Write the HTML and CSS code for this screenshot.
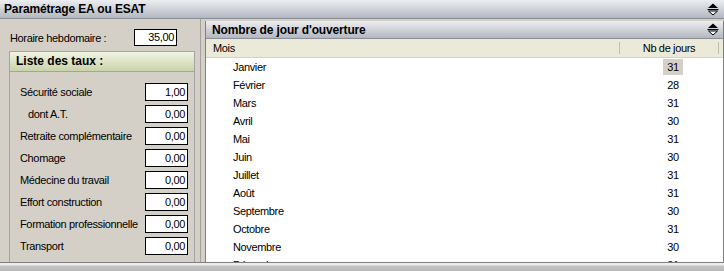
FILE: index.html
```html
<!DOCTYPE html>
<html>
<head>
<meta charset="utf-8">
<link rel="stylesheet" href="styles.css">
</head>
<body>
<div class="titlebar">
  <span class="title">Paramétrage EA ou ESAT</span>
  <svg class="toggle" width="12" height="13" viewBox="0 0 12 13"><path d="M6 0.5 L11 5 L1 5 Z" fill="#000"/><path d="M0.5 6.5 H11.5" stroke="#000" stroke-width="1"/><path d="M1.5 8 L10.5 8 L6 12 Z" fill="#fff" stroke="#000" stroke-width="1"/></svg>
</div>
<div class="main">
  <div class="left">
    <div class="horaire">
      <span>Horaire hebdomaire :</span>
      <div class="field">35,00</div>
    </div>
    <div class="group">
      <div class="group-head">Liste des taux :</div>
      <div class="rates">
        <div class="rate"><span>Sécurité sociale</span><div class="field">1,00</div></div>
        <div class="rate sub"><span>dont A.T.</span><div class="field">0,00</div></div>
        <div class="rate"><span>Retraite complémentaire</span><div class="field">0,00</div></div>
        <div class="rate"><span>Chomage</span><div class="field">0,00</div></div>
        <div class="rate"><span>Médecine du travail</span><div class="field">0,00</div></div>
        <div class="rate"><span>Effort construction</span><div class="field">0,00</div></div>
        <div class="rate"><span>Formation professionnelle</span><div class="field">0,00</div></div>
        <div class="rate"><span>Transport</span><div class="field">0,00</div></div>
      </div>
    </div>
  </div>
  <div class="right">
    <div class="panel-head">
      <span class="title">Nombre de jour d'ouverture</span>
      <svg class="toggle" width="12" height="13" viewBox="0 0 12 13"><path d="M6 0.5 L11 5 L1 5 Z" fill="#000"/><path d="M0.5 6.5 H11.5" stroke="#000" stroke-width="1"/><path d="M1.5 8 L10.5 8 L6 12 Z" fill="#fff" stroke="#000" stroke-width="1"/></svg>
    </div>
    <div class="cols">
      <div class="col-mois">Mois</div>
      <div class="col-nb">Nb de jours</div>
    </div>
    <div class="list">
      <div class="row"><span class="mois">Janvier</span><span class="nb current">31</span></div>
      <div class="row"><span class="mois">Février</span><span class="nb">28</span></div>
      <div class="row"><span class="mois">Mars</span><span class="nb">31</span></div>
      <div class="row"><span class="mois">Avril</span><span class="nb">30</span></div>
      <div class="row"><span class="mois">Mai</span><span class="nb">31</span></div>
      <div class="row"><span class="mois">Juin</span><span class="nb">30</span></div>
      <div class="row"><span class="mois">Juillet</span><span class="nb">31</span></div>
      <div class="row"><span class="mois">Août</span><span class="nb">31</span></div>
      <div class="row"><span class="mois">Septembre</span><span class="nb">30</span></div>
      <div class="row"><span class="mois">Octobre</span><span class="nb">31</span></div>
      <div class="row"><span class="mois">Novembre</span><span class="nb">30</span></div>
      <div class="row"><span class="mois">Décembre</span><span class="nb">31</span></div>
    </div>
  </div>
</div>
<div class="statusbar"></div>
</body>
</html>
```
FILE: styles.css
```css
html, body {
    margin: 0;
    padding: 0;
}
body {
    width: 724px;
    height: 271px;
    overflow: hidden;
    background: #d4d0c8;
    font-family: "Liberation Sans", Arial, sans-serif;
    font-size: 11px;
    letter-spacing: -0.35px;
    color: #000;
    white-space: nowrap;
}
.titlebar {
    height: 18px;
    border-bottom: 1px solid #8a8e96;
    background: linear-gradient(#eceef1, #b3b7bf);
    display: flex;
    align-items: center;
    justify-content: space-between;
    padding: 0 5px 0 4px;
}
.title {
    font-weight: bold;
    font-size: 12px;
    letter-spacing: -0.15px;
}
.toggle {
    display: block;
}
.main {
    height: 243px;
    display: flex;
}
.left {
    width: 201px;
    border-right: 1px solid #a4a09a;
    padding-top: 10px;
    box-sizing: border-box;
    overflow: hidden;
}
.horaire {
    display: flex;
    align-items: center;
    justify-content: space-between;
    padding: 0 23px 0 10px;
}
.field {
    width: 39px;
    height: 16px;
    border: 1px solid #000;
    background: #fff;
    text-align: right;
    padding-right: 2px;
    line-height: 16px;
    box-sizing: content-box;
}
.horaire .field {
    height: 15px;
    line-height: 15px;
}
.group {
    margin: 5px 0 0 9px;
    width: 186px;
    height: 400px;
    border: 1px solid #a4a4a4;
    box-sizing: border-box;
}
.group-head {
    height: 19px;
    line-height: 18px;
    padding-left: 6px;
    font-weight: bold;
    font-size: 12px;
    letter-spacing: 0;
    border-bottom: 1px solid #a4a4a4;
    background: linear-gradient(#f1f4e2, #c9d3ab);
}
.rates {
    padding: 11px 6px 0 10px;
    display: flex;
    flex-direction: column;
    gap: 4px;
}
.rate {
    display: flex;
    align-items: center;
    justify-content: space-between;
}
.rate.sub span {
    padding-left: 8px;
}
.right {
    flex: 1;
    margin: 2px 0 0 4px;
    border-left: 1px solid #808080;
    border-right: 1px solid #808080;
    background: #fff;
    overflow: hidden;
}
.panel-head {
    height: 17px;
    background: linear-gradient(#eceef1, #b3b7bf);
    border-bottom: 1px solid #8a8e96;
    display: flex;
    align-items: center;
    justify-content: space-between;
    padding: 0 4px 0 6px;
}
.cols {
    height: 18px;
    background: #ebe9d8;
    border-bottom: 1px solid #d6d2c2;
    display: flex;
    align-items: center;
}
.col-mois {
    width: 414px;
    padding-left: 7px;
    box-sizing: border-box;
    border-right: 1px solid #c4c0b0;
    height: 12px;
    line-height: 12px;
}
.col-nb {
    width: 98px;
    text-align: center;
    border-right: 1px solid #c4c0b0;
    height: 12px;
    line-height: 12px;
}
.row {
    height: 18px;
    display: flex;
    align-items: center;
}
.mois {
    width: 457px;
    padding-left: 27px;
    box-sizing: border-box;
}
.nb {
    width: 20px;
    height: 16px;
    line-height: 16px;
    text-align: center;
}
.nb.current {
    background: #d4d0c8;
}
.statusbar {
    height: 9px;
    border-top: 1px solid #808080;
    background: linear-gradient(#ececec 0, #ececec 2px, #c4c4c4 3px, #b8b8b8);
}
```
